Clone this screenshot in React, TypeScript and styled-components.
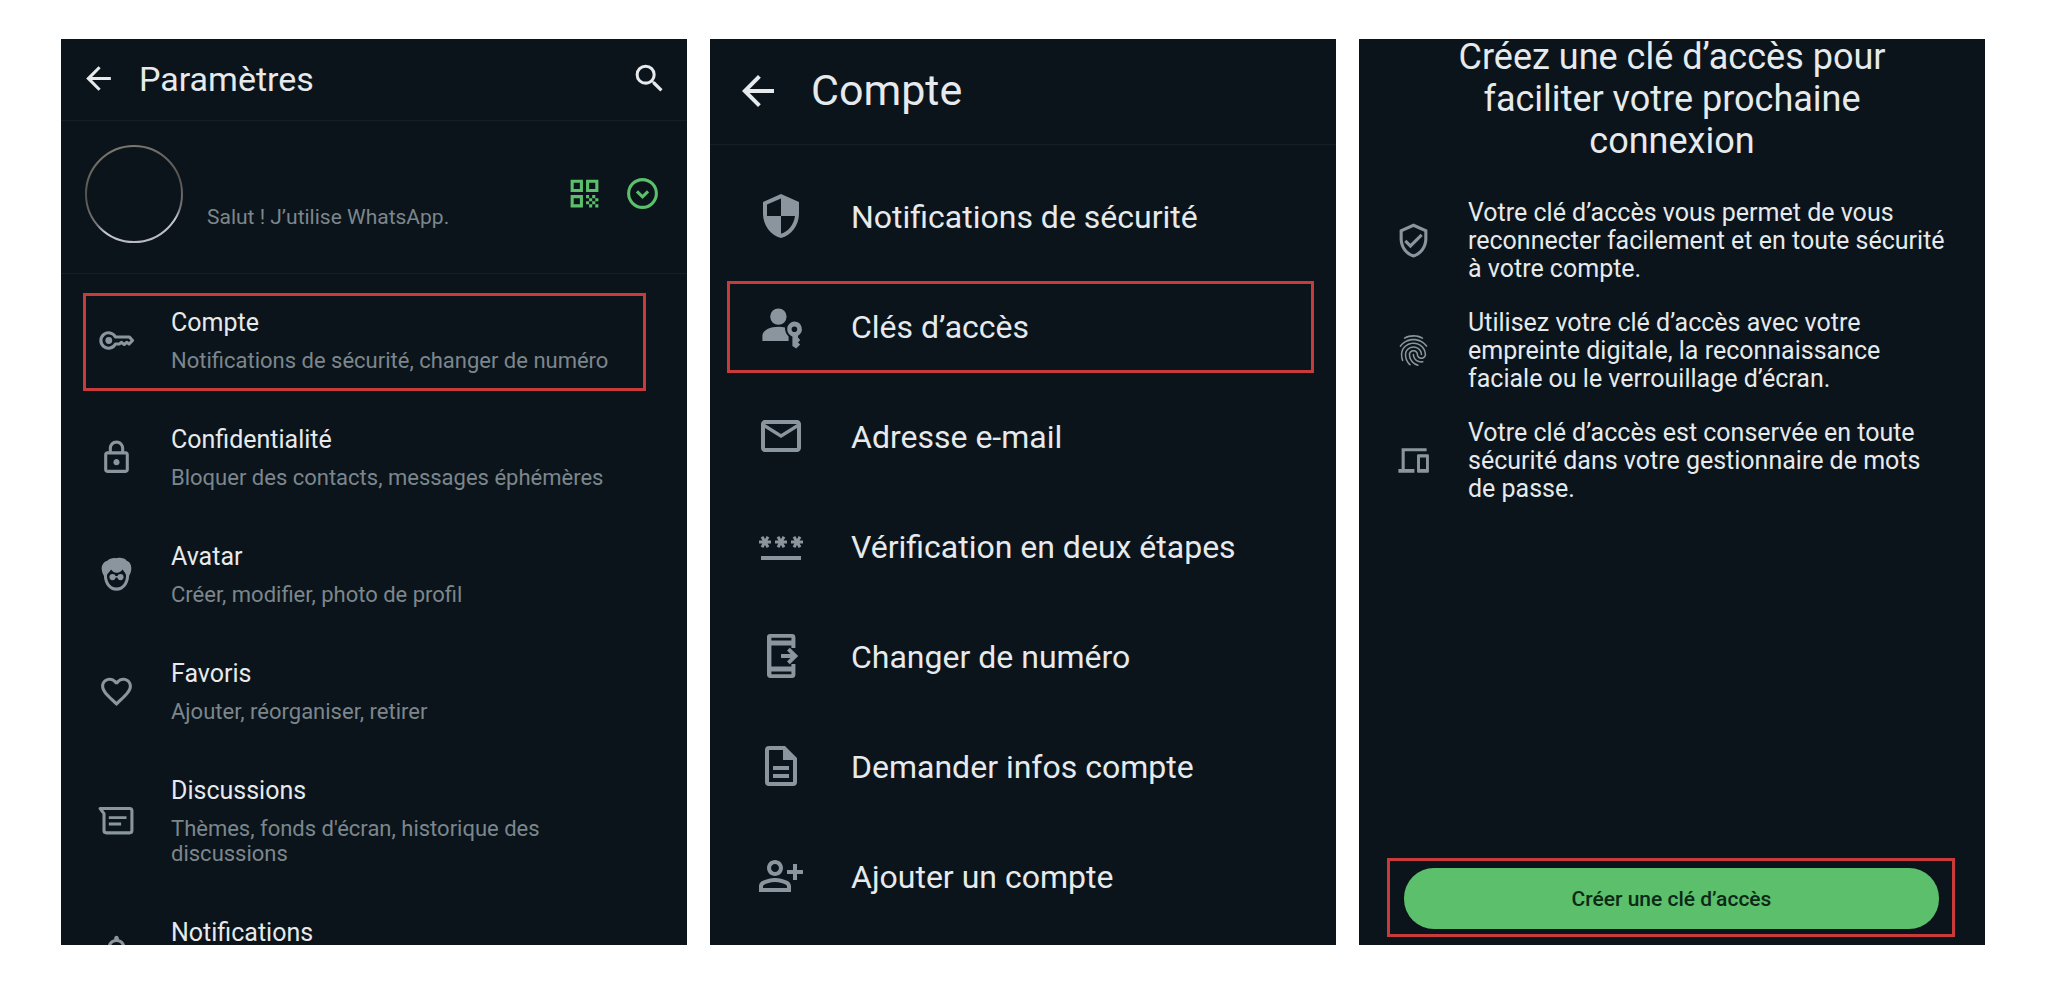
import React from 'react';
import styled, { createGlobalStyle } from 'styled-components';
import {
  MdArrowBack,
  MdSearch,
  MdOutlineLock,
  MdFavoriteBorder,
  MdNotificationsNone,
  MdSecurity,
  MdOutlineEmail,
  MdPassword,
  MdOutlinePersonAddAlt,
  MdOutlineVerifiedUser,
  MdFingerprint,
} from 'react-icons/md';

const color = {
  page: '#ffffff',
  panel: '#0b141a',
  text: '#e6eaed',
  muted: '#7c868d',
  icon: '#8b959d',
  line: '#152026',
  green: '#5bbf6b',
  buttonText: '#0c2a16',
  mark: '#c93a3a',
};

const GlobalStyle = createGlobalStyle`
  *, *::before, *::after { box-sizing: border-box; }
  body { margin: 0; background: ${color.page}; font-family: Roboto, sans-serif; }
  h1, h2, p, ul { margin: 0; padding: 0; }
  ul { list-style: none; }
  button { font-family: inherit; border: 0; background: none; padding: 0; color: inherit; cursor: pointer; }
  svg { display: block; flex: none; }
`;

const Page = styled.main`
  display: grid;
  grid-template-columns: repeat(3, minmax(0, 1fr));
  gap: 23px;
  height: 100vh;
  padding: 39px 63px 40px 61px;
`;

const Panel = styled.section<{ $scrolls?: boolean }>`
  display: flex;
  flex-direction: column;
  min-height: 0;
  overflow: ${p => (p.$scrolls ? 'hidden' : 'visible')};
  background: ${color.panel};
  color: ${color.text};
`;

const Header = styled.header<{ $large?: boolean }>`
  display: flex;
  flex: none;
  align-items: center;
  gap: ${p => (p.$large ? 29 : 22)}px;
  height: ${p => (p.$large ? 106 : 82)}px;
  padding: 0 ${p => (p.$large ? 24 : 19)}px 2px;
  border-bottom: 1px solid ${color.line};
`;

const HeaderTitle = styled.h1<{ $large?: boolean }>`
  flex: 1;
  font-size: ${p => (p.$large ? 43 : 34)}px;
  font-weight: 400;
  line-height: 1;
`;

const IconButton = styled.button<{ $size: number; $green?: boolean }>`
  flex: none;
  font-size: ${p => p.$size}px;
  color: ${p => (p.$green ? color.green : color.text)};
`;

const Profile = styled.div`
  display: flex;
  flex: none;
  align-items: center;
  gap: 21px;
  height: 153px;
  padding: 0 26px 7px 24px;
  border-bottom: 1px solid ${color.line};
`;

const Status = styled.p`
  flex: 1;
  padding: 48px 0 0 3px;
  font-size: 21px;
  line-height: 25px;
  color: ${color.muted};
`;

const SettingsList = styled.ul`
  padding-top: 8px;
`;

const AccountList = styled.ul`
  padding-top: 17px;
`;

const Item = styled.li`
  position: relative;
`;

const SettingButton = styled.button`
  display: flex;
  align-items: center;
  gap: 36px;
  width: 100%;
  padding: 27px 60px 26px 37px;
  text-align: left;
`;

const AccountButton = styled.button`
  display: flex;
  align-items: center;
  gap: 46px;
  width: 100%;
  height: 110px;
  padding: 0 24px 0 47px;
  font-size: 32px;
  text-align: left;
`;

const RowIcon = styled.span<{ $size: number }>`
  flex: none;
  padding-bottom: 2px;
  font-size: ${p => p.$size}px;
  color: ${color.icon};
`;

const RowText = styled.span`
  display: flex;
  flex-direction: column;
  gap: 11px;
  min-height: 64px;
`;

const RowTitle = styled.span`
  font-size: 25px;
  line-height: 28px;
`;

const RowDetail = styled.span`
  font-size: 22px;
  line-height: 25px;
  color: ${color.muted};
`;

const Highlight = styled.span<{ $inset: string }>`
  position: absolute;
  inset: ${p => p.$inset};
  border: 3px solid ${color.mark};
  pointer-events: none;
`;

const PasskeyTitle = styled.h2`
  margin-top: -3px;
  padding: 0 60px;
  font-size: 36px;
  font-weight: 400;
  line-height: 42px;
  text-align: center;
`;

const Benefits = styled.ul`
  display: flex;
  flex: 1;
  flex-direction: column;
  gap: 26px;
  padding: 37px 36px 0;
`;

const Benefit = styled.li`
  display: flex;
  align-items: center;
  gap: 36px;
  font-size: 25px;
  line-height: 28px;
`;

const Footer = styled.div`
  flex: none;
  margin: 0 30px 8px 28px;
  padding: 7px 13px 5px 14px;
  border: 3px solid ${color.mark};
`;

const PrimaryButton = styled.button`
  display: block;
  width: 100%;
  height: 61px;
  border-radius: 30px;
  background: ${color.green};
  color: ${color.buttonText};
  font-size: 21px;
  font-weight: 500;
`;

const Svg = ({ children }: { children: React.ReactNode }) => (
  <svg width="1em" height="1em" viewBox="0 0 24 24" fill="currentColor" aria-hidden="true">
    {children}
  </svg>
);

const KeyIcon = () => (
  <Svg>
    <path
      d="M11.300 9.700H20.400L22.400 12 20.200 14.300 18.600 13.200 17 14.600 15.300 13.200 13.800 14.300H11.300A5 5 0 1 1 11.300 9.700Z"
      fill="none"
      stroke="currentColor"
      strokeWidth="2"
      strokeLinejoin="round"
    />
    <circle cx="7" cy="12" r="2.200" />
  </Svg>
);

const AvatarIcon = () => (
  <Svg>
    <path
      fillRule="evenodd"
      d="M12 1.500C14.500 .8 17.300 1.400 18.600 3 20.800 3.600 21.800 6 21.600 8.500 21.500 10.400 20.900 11.800 20.200 12.800 20 18.600 16.500 22.500 12 22.500S4 18.600 3.800 12.800C3.100 11.800 2.500 10.400 2.400 8.500 2.200 6 3.800 3.400 6 3 7.500 1.700 9.800 1 12 1.500ZM8.500 8.800C7.500 10.600 6 11.200 5.800 12.600 5.900 17.300 8.500 20.400 12 20.400S18.100 17.300 18.200 12.600C18 11.200 17 10.400 16 8.800 14.500 10.600 13.200 11 12.200 10.800 11.200 11 9.800 10.600 8.500 8.800Z"
    />
    <circle cx="9.400" cy="13.700" r="2" />
    <circle cx="14.600" cy="13.700" r="2" />
    <path d="M9 13H15V14H9Z" />
  </Svg>
);

const ChatIcon = () => (
  <Svg>
    <path
      d="M1.400 4.200H20.500A1.500 1.500 0 0 1 22 5.700V18.500A1.500 1.500 0 0 1 20.500 20H5.400A1.500 1.500 0 0 1 3.900 18.500V7.500Z"
      fill="none"
      stroke="currentColor"
      strokeWidth="2"
      strokeLinejoin="round"
    />
    <path d="M7 9.200H18.500V11.100H7ZM7 13.300H15V15.200H7Z" />
  </Svg>
);

const QrIcon = () => (
  <Svg>
    <path
      fillRule="evenodd"
      d="M3 3H11V11H3ZM5 5V9H9V5ZM13 3H21V11H13ZM15 5V9H19V5ZM3 13H11V21H3ZM5 15V19H9V15Z"
    />
    <path d="M13 13H15V15H13ZM17 13H19V15H17ZM15 15H17V17H15ZM19 15H21V17H19ZM13 17H15V19H13ZM17 17H19V19H17ZM15 19H17V21H15ZM19 19H21V21H19Z" />
  </Svg>
);

const ExpandIcon = () => (
  <Svg>
    <g fill="none" stroke="currentColor" strokeWidth="2">
      <circle cx="12" cy="12" r="9" />
      <path d="M8.400 10.600 12 14.200 15.600 10.600" />
    </g>
  </Svg>
);

const PersonKeyIcon = () => (
  <Svg>
    <circle cx="10.700" cy="7.300" r="4.100" />
    <path d="M14 12.700C13 12.500 11.900 12.400 10.800 12.400 6.800 12.400 2.700 14 2.700 17V19.500H15.800V17.200C14.500 16 13.900 14.300 14 12.700Z" />
    <path
      fillRule="evenodd"
      d="M18.700 9.800A3.800 3.800 0 0 1 20.500 16.900V17.800L21.600 19 20.500 20.200 21.600 21.300 19.600 23.300 17.700 22V17.200A3.800 3.800 0 0 1 18.700 9.800ZM18.700 12.200A1.400 1.400 0 1 0 18.700 15 1.400 1.400 0 0 0 18.700 12.200Z"
    />
  </Svg>
);

const PhoneArrowIcon = () => (
  <Svg>
    <path
      fillRule="evenodd"
      d="M6.500 1H17.500A1.700 1.700 0 0 1 19.200 2.700V8H17.200V6.800H7.200V17.200H17.200V16H19.200V21.300A1.700 1.700 0 0 1 17.500 23H6.700A1.700 1.700 0 0 1 5 21.300V2.500A1.500 1.500 0 0 1 6.500 1ZM7.200 2.900V4.300H17.200V2.900ZM7.200 19.700V21.100H17.200V19.700Z"
    />
    <path d="M12 11H16.700L15 9.300 16.400 7.900 20.600 12 16.400 16.100 15 14.700 16.700 13H12Z" />
  </Svg>
);

const DocumentIcon = () => (
  <Svg>
    <path
      fillRule="evenodd"
      d="M6 2H14L20 8V20A2 2 0 0 1 18 22H6A2 2 0 0 1 4 20V4A2 2 0 0 1 6 2ZM6 4V20H18V9H13V4Z"
    />
    <path d="M8 12H16V14H8ZM8 16H16V18H8Z" />
  </Svg>
);

const DevicesIcon = () => (
  <Svg>
    <path d="M4.300 4H20.500V6H6.300V17.500H12.600V20H2.200V17.500H4.300Z" />
    <path
      fillRule="evenodd"
      d="M15 8H21.300A.7 .7 0 0 1 22 8.700V19.300A.7 .7 0 0 1 21.300 20H15A.7 .7 0 0 1 14.300 19.300V8.700A.7 .7 0 0 1 15 8ZM16.200 10V17.500H20.100V10Z"
    />
  </Svg>
);

const AvatarRing = () => (
  <svg width="98" height="98" viewBox="0 0 98 98" role="img" aria-label="Photo de profil">
    <defs>
      <linearGradient id="ring" x1="0.300" y1="0" x2="0.500" y2="1">
        <stop offset="0" stopColor="#7d7a70" />
        <stop offset="0.450" stopColor="#54514c" />
        <stop offset="0.750" stopColor="#77747c" />
        <stop offset="0.850" stopColor="#c9c9d2" />
        <stop offset="1" stopColor="#b9bac4" />
      </linearGradient>
    </defs>
    <circle cx="49" cy="49" r="48" fill="none" stroke="url(#ring)" strokeWidth="2" />
  </svg>
);

type Setting = { title: string; detail?: string; icon: React.ReactNode; marked?: boolean };

const settings: Setting[] = [
  { title: 'Compte', detail: 'Notifications de sécurité, changer de numéro', icon: <KeyIcon />, marked: true },
  { title: 'Confidentialité', detail: 'Bloquer des contacts, messages éphémères', icon: <MdOutlineLock /> },
  { title: 'Avatar', detail: 'Créer, modifier, photo de profil', icon: <AvatarIcon /> },
  { title: 'Favoris', detail: 'Ajouter, réorganiser, retirer', icon: <MdFavoriteBorder /> },
  { title: 'Discussions', detail: "Thèmes, fonds d'écran, historique des discussions", icon: <ChatIcon /> },
  { title: 'Notifications', icon: <MdNotificationsNone /> },
];

const account: Setting[] = [
  { title: 'Notifications de sécurité', icon: <MdSecurity /> },
  { title: 'Clés d’accès', icon: <PersonKeyIcon />, marked: true },
  { title: 'Adresse e-mail', icon: <MdOutlineEmail /> },
  { title: 'Vérification en deux étapes', icon: <MdPassword /> },
  { title: 'Changer de numéro', icon: <PhoneArrowIcon /> },
  { title: 'Demander infos compte', icon: <DocumentIcon /> },
  { title: 'Ajouter un compte', icon: <MdOutlinePersonAddAlt /> },
];

const benefits = [
  {
    text: 'Votre clé d’accès vous permet de vous reconnecter facilement et en toute sécurité à votre compte.',
    icon: <MdOutlineVerifiedUser />,
  },
  {
    text: 'Utilisez votre clé d’accès avec votre empreinte digitale, la reconnaissance faciale ou le verrouillage d’écran.',
    icon: <MdFingerprint />,
  },
  {
    text: 'Votre clé d’accès est conservée en toute sécurité dans votre gestionnaire de mots de passe.',
    icon: <DevicesIcon />,
  },
];

export default function App() {
  return (
    <>
      <GlobalStyle />
      <Page>
        <Panel $scrolls>
          <Header>
            <IconButton $size={37} aria-label="Retour">
              <MdArrowBack />
            </IconButton>
            <HeaderTitle>Paramètres</HeaderTitle>
            <IconButton $size={37} aria-label="Rechercher">
              <MdSearch />
            </IconButton>
          </Header>
          <Profile>
            <AvatarRing />
            <Status>Salut ! J’utilise WhatsApp.</Status>
            <IconButton $size={37} $green aria-label="Code QR">
              <QrIcon />
            </IconButton>
            <IconButton $size={37} $green aria-label="Changer de compte">
              <ExpandIcon />
            </IconButton>
          </Profile>
          <SettingsList>
            {settings.map(row => (
              <Item key={row.title}>
                <SettingButton>
                  <RowIcon $size={37}>{row.icon}</RowIcon>
                  <RowText>
                    <RowTitle>{row.title}</RowTitle>
                    {row.detail && <RowDetail>{row.detail}</RowDetail>}
                  </RowText>
                </SettingButton>
                {row.marked && <Highlight $inset="11px 41px 8px 22px" />}
              </Item>
            ))}
          </SettingsList>
        </Panel>

        <Panel>
          <Header $large>
            <IconButton $size={48} aria-label="Retour">
              <MdArrowBack />
            </IconButton>
            <HeaderTitle $large>Compte</HeaderTitle>
          </Header>
          <AccountList>
            {account.map(row => (
              <Item key={row.title}>
                <AccountButton>
                  <RowIcon $size={48}>{row.icon}</RowIcon>
                  {row.title}
                </AccountButton>
                {row.marked && <Highlight $inset="9px 22px 9px 17px" />}
              </Item>
            ))}
          </AccountList>
        </Panel>

        <Panel>
          <PasskeyTitle>Créez une clé d’accès pour faciliter votre prochaine connexion</PasskeyTitle>
          <Benefits>
            {benefits.map(item => (
              <Benefit key={item.text}>
                <RowIcon $size={37}>{item.icon}</RowIcon>
                <p>{item.text}</p>
              </Benefit>
            ))}
          </Benefits>
          <Footer>
            <PrimaryButton>Créer une clé d’accès</PrimaryButton>
          </Footer>
        </Panel>
      </Page>
    </>
  );
}
